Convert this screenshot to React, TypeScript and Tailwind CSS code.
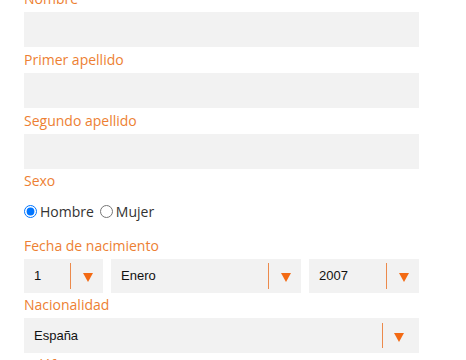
import React from "react";

const Label = ({ children, pt = "pt-[3px]" }: { children: React.ReactNode; pt?: string }) => (
  <div className={`${pt} pb-[4px] text-[14px] leading-[19px] text-[#ed7f33]`}>{children}</div>
);

const Input = () => <div className="h-[35px] w-full bg-[#f2f2f2]" />;

const Arrow = () => (
  <svg width="10" height="9" viewBox="0 0 10 9" className="mt-[3px] block">
    <polygon points="0,0 10,0 5,9" fill="#f36a14" />
  </svg>
);

const Select = ({
  value,
  w,
  h,
  sepH,
  gap,
  pr,
}: {
  value: string;
  w: string;
  h: string;
  sepH: string;
  gap: string;
  pr: string;
}) => (
  <div className={`${w} ${h} ${pr} flex items-center bg-[#f2f2f2]`}>
    <span
      className="flex-1 pl-[10px] text-[13px] text-[#111]"
      style={{ fontFamily: '"Liberation Sans", Arial, sans-serif' }}
    >
      {value}
    </span>
    <div className={`w-px ${sepH} bg-[#ec8a4c]`} />
    <div className={gap}>
      <Arrow />
    </div>
  </div>
);

export default function App() {
  return (
    <div
      className="w-[466px] h-[360px] overflow-hidden bg-white"
      style={{ fontFamily: '"Open Sans", sans-serif' }}
    >
      <div className="ml-[24px] w-[395px] mt-[-14px]">
        <Label>Nombre</Label>
        <Input />
        <Label>Primer apellido</Label>
        <Input />
        <Label>Segundo apellido</Label>
        <Input />
        <Label pt="pt-[2px]">Sexo</Label>
        <div className="pt-[7px] pb-[12px] flex items-center h-[39px] text-[14px] leading-[19px] text-[#333]">
          <input type="radio" name="sexo" defaultChecked className="m-0 w-[13px] h-[13px]" />
          <span className="ml-[3px]">Hombre</span>
          <input type="radio" name="sexo" className="m-0 ml-[6px] w-[13px] h-[13px]" />
          <span className="ml-[3px]">Mujer</span>
        </div>
        <Label>Fecha de nacimiento</Label>
        <div className="flex gap-[8px]">
          <Select value="1" w="w-[79px]" h="h-[34px]" sepH="h-[26px]" gap="ml-[12px]" pr="pr-[10px]" />
          <Select value="Enero" w="w-[190px]" h="h-[34px]" sepH="h-[26px]" gap="ml-[12px]" pr="pr-[10px]" />
          <Select value="2007" w="w-[110px]" h="h-[34px]" sepH="h-[26px]" gap="ml-[12px]" pr="pr-[10px]" />
        </div>
        <Label pt="pt-[2px]">Nacionalidad</Label>
        <Select value="España" w="w-[395px]" h="h-[35px]" sepH="h-[25px]" gap="ml-[11px]" pr="pr-[15px]" />
        <Label pt="pt-[2px]">Teléfono</Label>
      </div>
    </div>
  );
}
